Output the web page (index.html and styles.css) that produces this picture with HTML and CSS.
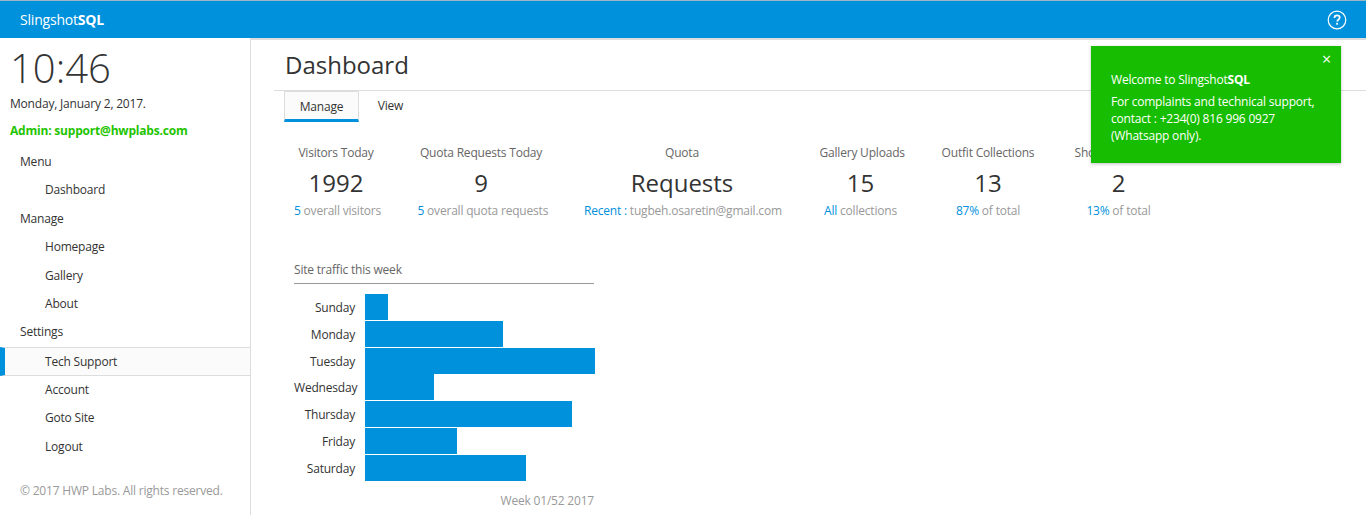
FILE: index.html
```html
<!DOCTYPE html>
<html lang="en">
<head>
    <meta charset="UTF-8">
    <meta name="viewport" content="width=device-width, initial-scale=1.0">
    <title>SlingshotSQL - Dashboard</title>
    <link rel="stylesheet" href="styles.css">
</head>
<body>
    <header class="topbar">
        <div class="brand">Slingshot<b>SQL</b></div>
        <svg class="help" width="20" height="20" viewBox="0 0 20 20">
            <circle cx="10" cy="10" r="8.8" fill="none" stroke="#fff" stroke-width="1.2"/>
            <path d="M7.4 7.9c0-1.6 1.1-2.5 2.7-2.5s2.6.9 2.6 2.2c0 1.1-.6 1.6-1.4 2.2-.7.5-1 .9-1 1.8" fill="none" stroke="#fff" stroke-width="1.7"/>
            <rect x="9.2" y="12.8" width="1.8" height="1.9" fill="#fff"/>
        </svg>
    </header>

    <div class="layout">
        <aside class="sidebar">
            <div class="clock">10:46</div>
            <div class="date">Monday, January 2, 2017.</div>
            <div class="admin">Admin: support@hwplabs.com</div>
            <ul class="nav">
                <li class="nav-head">Menu</li>
                <li>Dashboard</li>
                <li class="nav-head">Manage</li>
                <li>Homepage</li>
                <li>Gallery</li>
                <li>About</li>
                <li class="nav-head">Settings</li>
                <li class="active">Tech Support</li>
                <li>Account</li>
                <li>Goto Site</li>
                <li>Logout</li>
            </ul>
            <div class="copyright">© 2017 HWP Labs. All rights reserved.</div>
        </aside>

        <main class="content">
            <h1>Dashboard</h1>
            <div class="tabs">
                <div class="tab selected">Manage</div>
                <div class="tab">View</div>
            </div>

            <div class="stats">
                <div class="stat">
                    <div class="stat-title">Visitors Today</div>
                    <div class="stat-value">1992</div>
                    <div class="stat-note"><span>5</span> overall visitors</div>
                </div>
                <div class="stat">
                    <div class="stat-title">Quota Requests Today</div>
                    <div class="stat-value">9</div>
                    <div class="stat-note"><span>5</span> overall quota requests</div>
                </div>
                <div class="stat">
                    <div class="stat-title">Quota</div>
                    <div class="stat-value">Requests</div>
                    <div class="stat-note"><span>Recent :</span> tugbeh.osaretin@gmail.com</div>
                </div>
                <div class="stat">
                    <div class="stat-title">Gallery Uploads</div>
                    <div class="stat-value">15</div>
                    <div class="stat-note"><span>All</span> collections</div>
                </div>
                <div class="stat">
                    <div class="stat-title">Outfit Collections</div>
                    <div class="stat-value">13</div>
                    <div class="stat-note"><span>87%</span> of total</div>
                </div>
                <div class="stat">
                    <div class="stat-title">Shop Collections</div>
                    <div class="stat-value">2</div>
                    <div class="stat-note"><span>13%</span> of total</div>
                </div>
            </div>

            <section class="chart">
                <div class="chart-title">Site traffic this week</div>
                <div class="bars">
                    <div class="bar-label">Sunday</div><div class="bar" style="width: 23px"></div>
                    <div class="bar-label">Monday</div><div class="bar" style="width: 138px"></div>
                    <div class="bar-label">Tuesday</div><div class="bar" style="width: 230px"></div>
                    <div class="bar-label">Wednesday</div><div class="bar" style="width: 69px"></div>
                    <div class="bar-label">Thursday</div><div class="bar" style="width: 207px"></div>
                    <div class="bar-label">Friday</div><div class="bar" style="width: 92px"></div>
                    <div class="bar-label">Saturday</div><div class="bar" style="width: 161px"></div>
                </div>
                <div class="chart-foot">Week 01/52 2017</div>
            </section>
        </main>
    </div>

    <div class="toast">
        <span class="toast-close">×</span>
        <p>Welcome to Slingshot<b>SQL</b></p>
        <p>For complaints and technical support, contact : +234(0) 816 996 0927 (Whatsapp only).</p>
    </div>
</body>
</html>
```

FILE: styles.css
```css
body {
    font-family: "Open Sans", "Noto Sans", sans-serif;
    font-size: 12px;
    letter-spacing: -0.2px;
    color: #333;
    margin: 0;
    background: #fff;
    height: 530px;
    overflow: hidden;
}
.topbar {
    display: flex;
    align-items: center;
    justify-content: space-between;
    height: 37px;
    padding: 0 19px 0 20px;
    background-color: #0091dc;
    border-top: 1px solid #9cb4c4;
    color: #fff;
}
.brand {
    font-size: 14px;
}
.layout {
    display: flex;
    height: 477px;
}
.sidebar {
    width: 250px;
    border-right: 1px solid #ddd;
    flex: none;
}
.clock {
    font-size: 40px;
    font-weight: 300;
    line-height: 48px;
    margin: 6px 0 0 10px;
    letter-spacing: 0;
}
.date {
    margin: 3px 0 0 10px;
    line-height: 18px;
}
.admin {
    margin: 9px 0 0 10px;
    line-height: 18px;
    font-weight: 700;
    color: #1fc400;
}
.nav {
    list-style: none;
    margin: 8px 0 0;
    padding: 0;
}
.nav li {
    height: 28.4px;
    line-height: 28.4px;
    padding-left: 45px;
    box-sizing: border-box;
}
.nav .nav-head {
    padding-left: 20px;
}
.nav .active {
    height: 29px;
    background: #fbfbfb;
    border-top: 1px solid #ddd;
    border-bottom: 1px solid #ddd;
    border-left: 5px solid #0091dc;
    padding-left: 40px;
    line-height: 27px;
}
.copyright {
    margin: 21px 0 0 20px;
    color: #999;
}
.content {
    flex: 1;
    padding-left: 23px;
    border-top: 2px solid #ddd;
}
h1 {
    font-size: 24px;
    font-weight: 400;
    line-height: 50px;
    margin: 0;
    padding-left: 11px;
    letter-spacing: 0;
    border-bottom: 1px solid #ddd;
}
.tabs {
    display: flex;
    padding-left: 10px;
}
.tab {
    width: 75px;
    height: 31px;
    line-height: 30px;
    text-align: center;
    box-sizing: border-box;
}
.tab + .tab {
    width: 63px;
}
.tab.selected {
    background: #fbfbfb;
    border: 1px solid #ddd;
    border-top: 1px solid #ddd;
    border-bottom: 3px solid #0091dc;
}
.stats {
    display: grid;
    grid-template-columns: 84px 127px 196px 82px 94px 88px;
    column-gap: 39.5px;
    margin: 22px 0 0 20px;
    text-align: center;
    white-space: nowrap;
}
.stat-title {
    color: #666;
    line-height: 18px;
}
.stat-value {
    font-size: 24px;
    line-height: 34px;
    margin-top: 4px;
    letter-spacing: 0;
}
.stat-note {
    color: #999;
    line-height: 18px;
    margin-top: 2px;
}
.stat-note span {
    color: #0091dc;
}
.chart {
    width: 300px;
    margin: 41px 0 0 20px;
}
.chart-title {
    color: #666;
    line-height: 18px;
    padding-bottom: 4px;
    border-bottom: 1px solid #999;
}
.bars {
    display: grid;
    grid-template-columns: 61px 1fr;
    column-gap: 10px;
    grid-auto-rows: 26px;
    row-gap: 0.8px;
    margin-top: 10px;
    white-space: nowrap;
}
.bar-label {
    text-align: right;
    line-height: 28px;
}
.bar {
    background-color: #0091dc;
}
.chart-foot {
    text-align: right;
    color: #999;
    margin-top: 11px;
    line-height: 18px;
}
.toast {
    position: absolute;
    left: 1091px;
    top: 46px;
    width: 250px;
    height: 117px;
    box-sizing: border-box;
    padding: 25px 20px 0;
    background-color: #17bd00;
    box-shadow: 0 1px 3px rgba(0, 0, 0, 0.25);
    color: #fff;
    line-height: 17px;
}
.toast p {
    margin: 0 0 5px;
}
.toast-close {
    position: absolute;
    right: 10px;
    top: 5px;
    font-size: 16px;
}
```
